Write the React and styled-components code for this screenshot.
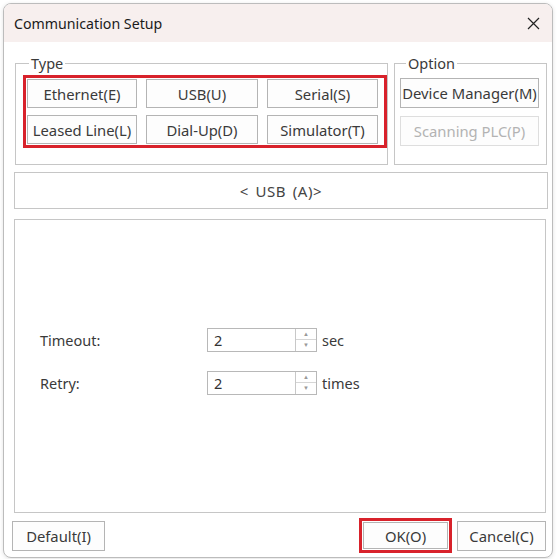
import React from 'react';
import styled, { createGlobalStyle } from 'styled-components';

const GlobalStyle = createGlobalStyle`
  html, body {
    margin: 0;
    padding: 0;
    background: #ffffff;
  }
  body {
    font-family: 'Noto Sans', 'Open Sans', sans-serif;
    color: #333;
  }
`;

const Page = styled.div`
  position: relative;
  width: 557px;
  height: 559px;
  padding: 3px 4px 3px 3px;
  box-sizing: border-box;
  overflow: hidden;
`;

// text of the window lying behind the dialog, only its lowest pixels show
const BehindText = styled.div`
  position: absolute;
  top: -16px;
  left: 236px;
  font-size: 15px;
  letter-spacing: 2px;
  color: #222;
  z-index: 0;
`;

const Window = styled.div`
  position: relative;
  z-index: 1;
  display: flex;
  flex-direction: column;
  height: 100%;
  border: 1px solid #bcbcbc;
  border-radius: 8px;
  background: #ffffff;
  overflow: hidden;
  box-shadow: 0 1px 4px rgba(0, 0, 0, 0.12);
`;

const TitleBar = styled.div`
  display: flex;
  align-items: center;
  justify-content: space-between;
  height: 38px;
  padding: 0 12px 0 10px;
  background: #f7efee;
  font-size: 14.2px;
  color: #1b1b1b;
`;

const CloseIcon = styled.svg`
  width: 13px;
  height: 13px;
`;

const Content = styled.div`
  flex: 1;
  display: flex;
  flex-direction: column;
  padding: 12px 5px 0 10px;
`;

const TopRow = styled.div`
  display: flex;
  gap: 6px;
  margin-left: 1px;
`;

const Group = styled.fieldset`
  margin: 0;
  height: 111px;
  box-sizing: border-box;
  border: 1px solid #c6c6c6;
  padding: ${p => p.$pad};
  width: ${p => p.$width}px;
  min-width: 0;

  legend {
    padding: 0 2px;
    margin-left: 6px;
    font-size: 14.5px;
    line-height: 18px;
    color: #3a3a3a;
  }
`;

const Highlight = styled.div`
  border: 3px solid #d8222b;
  padding: 1px;
`;

const ButtonGrid = styled.div`
  display: grid;
  grid-template-columns: 110px 112px 111px;
  grid-auto-rows: 29px;
  column-gap: 9px;
  row-gap: 7px;
`;

const OptionStack = styled.div`
  display: flex;
  flex-direction: column;
  gap: 8px;
`;

const Button = styled.button`
  height: ${p => p.$height || 29}px;
  width: ${p => (p.$width ? `${p.$width}px` : 'auto')};
  border: 1px solid ${p => (p.disabled ? '#dedede' : '#b4b4b4')};
  background: #fdfdfd;
  font-family: 'Noto Sans', 'Open Sans', sans-serif;
  font-size: 14.8px;
  color: ${p => (p.disabled ? '#b3b3b3' : '#3a3a3a')};
  padding: 0;
  white-space: nowrap;
  box-sizing: border-box;
`;

const PortBar = styled.div`
  margin-top: 7px;
  height: 35px;
  border: 1px solid #c6c6c6;
  display: flex;
  align-items: center;
  justify-content: center;
  font-size: 15px;
  letter-spacing: 0.6px;
  word-spacing: 2px;
  color: #444;
  margin-right: -1px;
`;

const SettingsPanel = styled.div`
  margin-top: 10px;
  height: 294px;
  box-sizing: border-box;
  border: 1px solid #c6c6c6;
  margin-right: 1px;
  display: flex;
  flex-direction: column;
  justify-content: center;
  gap: 19px;
  padding: 0 0 10px 25px;
`;

const FieldRow = styled.div`
  display: flex;
  align-items: center;
  font-size: 14.5px;
  color: #3a3a3a;
`;

const FieldLabel = styled.span`
  width: 167px;
`;

const Spin = styled.div`
  display: flex;
  width: 110px;
  height: 24px;
  box-sizing: border-box;
  border: 1px solid #b8b8b8;
  background: #fff;
`;

const SpinValue = styled.span`
  flex: 1;
  display: flex;
  align-items: center;
  padding-left: 6px;
  font-size: 14.5px;
  color: #333;
`;

const SpinButtons = styled.div`
  width: 20px;
  display: flex;
  flex-direction: column;
  border-left: 1px solid #c8c8c8;
`;

const SpinArrow = styled.div`
  flex: 1;
  display: flex;
  align-items: center;
  justify-content: center;
  font-size: 6px;
  color: #999;
  border-top: ${p => (p.$down ? '1px solid #d6d6d6' : 'none')};
`;

const Unit = styled.span`
  margin-left: 5px;
`;

const Footer = styled.div`
  display: flex;
  align-items: center;
  padding: 5px 1px 0 2px;
  margin-left: -4px;
`;

const Spacer = styled.div`
  flex: 1;
`;

const OkFrame = styled.div`
  border: 3px solid #d8222b;
  padding: 1px;
  margin-right: 5px;
`;

const SpinBox = ({ value }) => (
  <Spin>
    <SpinValue>{value}</SpinValue>
    <SpinButtons>
      <SpinArrow>▲</SpinArrow>
      <SpinArrow $down>▼</SpinArrow>
    </SpinButtons>
  </Spin>
);

export default function App() {
  return (
    <Page>
      <GlobalStyle />
      <BehindText>/ / \ \ / /&nbsp;&nbsp;&nbsp;&nbsp;&nbsp;/ /</BehindText>
      <Window>
        <TitleBar>
          <span>Communication Setup</span>
          <CloseIcon viewBox="0 0 13 13">
            <path d="M1 1 L12 12 M12 1 L1 12" stroke="#222" strokeWidth="1.2" />
          </CloseIcon>
        </TitleBar>
        <Content>
          <TopRow>
            <Group $width={373} $pad="3px 0 0 7px">
              <legend>Type</legend>
              <Highlight>
                <ButtonGrid>
                  <Button>Ethernet(E)</Button>
                  <Button>USB(U)</Button>
                  <Button>Serial(S)</Button>
                  <Button>Leased Line(L)</Button>
                  <Button>Dial-Up(D)</Button>
                  <Button>Simulator(T)</Button>
                </ButtonGrid>
              </Highlight>
            </Group>
            <Group $width={153} $pad="6px 0 0 5px">
              <legend>Option</legend>
              <OptionStack>
                <Button $width={139} $height={30}>Device Manager(M)</Button>
                <Button $width={139} $height={30} disabled>Scanning PLC(P)</Button>
              </OptionStack>
            </Group>
          </TopRow>
          <PortBar>&lt; USB (A)&gt;</PortBar>
          <SettingsPanel>
            <FieldRow>
              <FieldLabel>Timeout:</FieldLabel>
              <SpinBox value="2" />
              <Unit>sec</Unit>
            </FieldRow>
            <FieldRow>
              <FieldLabel>Retry:</FieldLabel>
              <SpinBox value="2" />
              <Unit>times</Unit>
            </FieldRow>
          </SettingsPanel>
          <Footer>
            <Button $width={93} $height={30}>Default(I)</Button>
            <Spacer />
            <OkFrame>
              <Button $width={85} $height={27}>OK(O)</Button>
            </OkFrame>
            <Button $width={89} $height={30}>Cancel(C)</Button>
          </Footer>
        </Content>
      </Window>
    </Page>
  );
}
